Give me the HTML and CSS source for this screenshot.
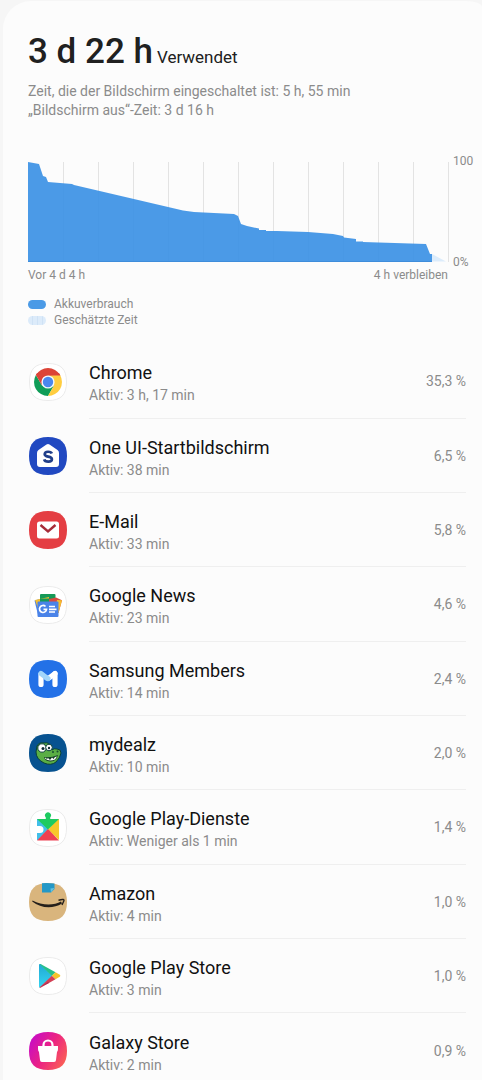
FILE: index.html
```html
<!DOCTYPE html>
<html lang="de">
<head>
    <meta charset="UTF-8">
    <meta name="viewport" content="width=device-width, initial-scale=1.0">
    <title>Akkuverbrauch</title>
    <link rel="stylesheet" href="styles.css">
</head>
<body>
    <main class="card">
        <header>
            <h1 class="title"><span class="total">3 d 22 h</span><span class="used">Verwendet</span></h1>
            <p class="summary">Zeit, die der Bildschirm eingeschaltet ist: 5 h, 55 min<br>„Bildschirm aus“-Zeit: 3 d 16 h</p>
        </header>

        <section class="usage">
            <div class="plot">
                <svg class="chart" viewBox="0 0 421 101" preserveAspectRatio="none" aria-hidden="true">
                    <path class="grid" d="M35.500 1V101M70.500 1V101M105.500 1V101M140.500 1V101M175.500 1V101M210.500 1V101M245.500 1V101M280.500 1V101M315.500 1V101M350.500 1V101M385.500 1V101M420.500 1V101"/>
                    <!-- estimated time -->
                    <path fill="#dcecfb" d="M404 93L418 100.500H404z"/>
                    <path class="level" d="M0 1L11 3 15 15 18 16 20 21 44 23 46 24 155 49.500 166 51 206 53 210 55 213 63 219 65 231 67.500V69H238V70H249L280 71 305 73 315 75 316 76.500 328 78V80.500H335V81L398 83 402 93H404V101H0z"/>
                    <path class="baseline" d="M0 100.500H404"/>
                </svg>
                <div class="scale"><span>100</span><span>0%</span></div>
            </div>
            <div class="range"><span>Vor 4 d 4 h</span><span>4 h verbleiben</span></div>
            <ul class="legend">
                <li><span class="swatch"></span>Akkuverbrauch</li>
                <li><span class="swatch swatch-estimate"></span>Geschätzte Zeit</li>
            </ul>
        </section>

        <ul class="apps">
            <li class="app">
                <svg class="icon" viewBox="0 0 38 38">
                    <path class="tile" d="M19 .5C32 .5 37.500 6 37.500 19S32 37.500 19 37.500.5 32 .5 19 6 .5 19 .5z"/>
                    <path fill="#dc4437" d="M6.900 12A14 14 0 0 1 31.100 12L19 13z"/>
                    <path fill="#109d58" d="M6.900 12A14 14 0 0 0 19 33L25 22.500 13 22.500z"/>
                    <path fill="#ffcd40" d="M31.100 12A14 14 0 0 1 19 33L25 22.500 19 12.500z"/>
                    <path fill="#dc4437" d="M6.900 12L13 22.500 19 12.500H31.400L30 10H8z"/>
                    <circle cx="19" cy="19" r="6.600" fill="#f4f8fc"/>
                    <circle cx="19" cy="19" r="5.200" fill="#4a87ee"/>
                </svg>
                <div class="entry"><div class="name"><h2>Chrome</h2><p>Aktiv: 3 h, 17 min</p></div><span class="percent">35,3 %</span></div>
            </li>
            <li class="app">
                <svg class="icon" viewBox="0 0 38 38">
                    <path fill="#2149c1" d="M19 0C32 0 38 6 38 19S32 38 19 38 0 32 0 19 6 0 19 0z"/>
                    <path fill="#fff" d="M17.500 7.500Q19 6.500 20.500 7.500L28.500 13Q30 14 30 16V27Q30 30 27 30H11Q8 30 8 27V16Q8 14 9.500 13z"/>
                    <path fill="none" stroke="#203e89" stroke-width="2.700" d="M22.800 16.500C22 14.200 15.800 13.900 15.700 17.200 15.700 20.600 22.900 18.600 22.900 22.200 22.800 25.700 15.900 25.200 15.200 22.400"/>
                </svg>
                <div class="entry"><div class="name"><h2>One UI-Startbildschirm</h2><p>Aktiv: 38 min</p></div><span class="percent">6,5 %</span></div>
            </li>
            <li class="app">
                <svg class="icon" viewBox="0 0 38 38">
                    <path fill="#e43e43" d="M19 0C32 0 38 6 38 19S32 38 19 38 0 32 0 19 6 0 19 0z"/>
                    <rect x="8" y="10.500" width="22" height="17" rx="2.500" fill="#fff"/>
                    <path fill="none" stroke="#a72c38" stroke-width="2.400" d="M11.500 14L19 20.500 26.500 14"/>
                </svg>
                <div class="entry"><div class="name"><h2>E-Mail</h2><p>Aktiv: 33 min</p></div><span class="percent">5,8 %</span></div>
            </li>
            <li class="app">
                <svg class="icon" viewBox="0 0 38 38">
                    <path class="tile" d="M19 .5C32 .5 37.500 6 37.500 19S32 37.500 19 37.500.5 32 .5 19 6 .5 19 .5z"/>
                    <rect x="11" y="8" width="15.500" height="12" rx="1" fill="#159957"/>
                    <path fill="#4a83e8" d="M5.500 14.500L11 13V29L9 29z"/>
                    <path fill="#f6be2d" d="M6 14L20 11V20L9 22z"/>
                    <path fill="#159957" d="M11 12.500H26V16H11z"/>
                    <path fill="#d74940" d="M20 13L27 11.500 33 14.200 29.500 27H20z"/>
                    <path fill="#f6be2d" d="M28 14L33 14.200 29.500 27 26 26z"/>
                    <rect x="8.500" y="15.500" width="21" height="15.500" rx="1" fill="#4a83e8"/>
                    <path fill="none" stroke="#fff" stroke-width="1.700" d="M16.500 20.500A3.500 3.500 0 1 0 17.500 23.300H14.500M20 20.500H26M20 23.300H27.500M20 26H26"/>
                </svg>
                <div class="entry"><div class="name"><h2>Google News</h2><p>Aktiv: 23 min</p></div><span class="percent">4,6 %</span></div>
            </li>
            <li class="app">
                <svg class="icon" viewBox="0 0 38 38">
                    <path fill="#2371e7" d="M19 0C32 0 38 6 38 19S32 38 19 38 0 32 0 19 6 0 19 0z"/>
                    <g fill="none" stroke-linecap="round" stroke-linejoin="round" stroke-width="5.200">
                        <path stroke="#fff" d="M12 14V24.500M26 13.500V24.500"/>
                        <path stroke="#a2d6fa" d="M12 13.500L18.500 18.500"/>
                        <path stroke="#fff" d="M20 18L26 13.500"/>
                        <path stroke="#a2d6fa" d="M17.500 17.800L19 18.500"/>
                    </g>
                </svg>
                <div class="entry"><div class="name"><h2>Samsung Members</h2><p>Aktiv: 14 min</p></div><span class="percent">2,4 %</span></div>
            </li>
            <li class="app">
                <svg class="icon" viewBox="0 0 38 38">
                    <path fill="#075290" d="M19 0C32 0 38 6 38 19S32 38 19 38 0 32 0 19 6 0 19 0z"/>
                    <path fill="#5aae45" stroke="#0b4038" d="M8 12Q10 8 15 9 20 8 22 12L23 16Q25 14 28 15 32 15 32 19 31 24 27 28 22 32 15 29 7 25 7 18z"/>
                    <path fill="#123d25" d="M15 23Q22 24 29 21 27 28 21 27.500 16 27 15 23z"/>
                    <path fill="#fff" d="M16 23.500L18 25 19 24 21 26 23 23.500 24.500 25 26 23 28 22.500 26 25.500Q20 28 16 24.500z"/>
                    <circle cx="13" cy="14" r="4.200" fill="#fff" stroke="#0b4038"/>
                    <circle cx="20" cy="13.500" r="3.300" fill="#fff" stroke="#0b4038"/>
                    <circle cx="14" cy="14.500" r="1.500" fill="#102d35"/>
                    <circle cx="20" cy="14" r="1.200" fill="#102d35"/>
                    <circle cx="24" cy="18" r="1" fill="#174c30"/>
                    <circle cx="28.500" cy="17.500" r="1" fill="#174c30"/>
                </svg>
                <div class="entry"><div class="name"><h2>mydealz</h2><p>Aktiv: 10 min</p></div><span class="percent">2,0 %</span></div>
            </li>
            <li class="app">
                <svg class="icon" viewBox="0 0 38 38">
                    <path class="tile" d="M19 .5C32 .5 37.500 6 37.500 19S32 37.500 19 37.500.5 32 .5 19 6 .5 19 .5z"/>
                    <path fill="#42bfe9" d="M8 10H10L19.500 20 9 31H8V24H11A3.500 3.500 0 0 0 11 17H8z"/>
                    <path fill="#f8c72b" d="M30 10V31L19 20.500 29 10z"/>
                    <path fill="#ee4052" d="M8 31.500L19 20 30 31.500z"/>
                    <path fill="#1ecb61" d="M8 10H16.800V8.500A3 3 0 1 1 21.200 8.500V10H30L19 20.500z"/>
                </svg>
                <div class="entry"><div class="name"><h2>Google Play-Dienste</h2><p>Aktiv: Weniger als 1 min</p></div><span class="percent">1,4 %</span></div>
            </li>
            <li class="app">
                <svg class="icon" viewBox="0 0 38 38">
                    <path fill="#d9b57d" d="M19 0C32 0 38 6 38 19S32 38 19 38 0 32 0 19 6 0 19 0z"/>
                    <path fill="#2398c7" d="M13 .2Q19 -.2 25.500.5V6L22 9.500H13z"/>
                    <path fill="#66c2df" d="M25.500 5L21.500 5.500 22 9.500z"/>
                    <path fill="#25201b" d="M3.500 17.500C13 22.500 25 22.500 32 18.500L33 20.500C24 26 12 25.500 3.200 18.500z"/>
                    <path fill="none" stroke="#25201b" stroke-width="1.400" d="M29.500 17.200Q36 15.500 34.800 18L33 22"/>
                </svg>
                <div class="entry"><div class="name"><h2>Amazon</h2><p>Aktiv: 4 min</p></div><span class="percent">1,0 %</span></div>
            </li>
            <li class="app">
                <svg class="icon" viewBox="0 0 38 38">
                    <defs>
                        <linearGradient id="play" x2="0" y2="1"><stop stop-color="#21a8d4"/><stop offset="1" stop-color="#35d5f1"/></linearGradient>
                    </defs>
                    <path class="tile" d="M19 .5C32 .5 37.500 6 37.500 19S32 37.500 19 37.500.5 32 .5 19 6 .5 19 .5z"/>
                    <path fill="url(#play)" d="M10 8Q10 6.500 11.500 7L23 18.700 11.500 30.500Q10 31 10 29.500z"/>
                    <path fill="#27c08a" d="M10.500 7Q11 6.700 12 7.200L26.500 15.200 22.800 19z"/>
                    <path fill="#f5c32c" d="M26.500 15.200L30.800 17.700Q32 18.700 30.800 19.800L26.500 22.300 22.800 18.700z"/>
                    <path fill="#d34055" d="M22.800 18.700L26.500 22.300 12 30.400Q11 31 10.500 30.500z"/>
                    <path fill="#a92f55" d="M10.500 30.500L19 25 20 26z"/>
                </svg>
                <div class="entry"><div class="name"><h2>Google Play Store</h2><p>Aktiv: 3 min</p></div><span class="percent">1,0 %</span></div>
            </li>
            <li class="app">
                <svg class="icon" viewBox="0 0 38 38">
                    <defs>
                        <linearGradient id="galaxy" x1="0" y1=".2" x2="1" y2=".8"><stop stop-color="#c60bc8"/><stop offset=".5" stop-color="#ec2382"/><stop offset="1" stop-color="#fb6352"/></linearGradient>
                    </defs>
                    <path fill="url(#galaxy)" d="M19 0C32 0 38 6 38 19S32 38 19 38 0 32 0 19 6 0 19 0z"/>
                    <path fill="#fff" d="M9 14H29V17Q29 19 28 20L27 28Q27 30 25 30H13Q11 30 11 28L10 20Q9 19 9 17z"/>
                    <path fill="none" stroke="#fff" stroke-width="2.200" d="M14.500 15V13A4.500 4.500 0 0 1 23.500 13V15"/>
                </svg>
                <div class="entry"><div class="name"><h2>Galaxy Store</h2><p>Aktiv: 2 min</p></div><span class="percent">0,9 %</span></div>
            </li>
        </ul>
    </main>
</body>
</html>
```

FILE: styles.css
```css
* {
    box-sizing: border-box;
}
body {
    margin: 0;
    padding: 1px 0 0 3px;
    background-color: #f6f6f6;
    color: #8b8b8b;
    font-family: Roboto, sans-serif;
}
h1, h2, p, ul {
    margin: 0;
    padding: 0;
    font-weight: 400;
}
ul {
    list-style: none;
}
.card {
    padding: 30px 16px 0 25px;
    background-color: #fcfcfc;
    border-radius: 28px 16px 0 0 / 28px 6px 0 0;
}

/* Header */
.title {
    display: flex;
    align-items: baseline;
    gap: 4px;
    color: #202020;
    line-height: 42px;
}
.total {
    font-size: 35px;
    font-weight: 500;
}
.used {
    font-size: 17px;
}
.summary {
    margin-top: 4px;
    font-size: 14px;
    line-height: 19px;
}

/* Battery chart */
.usage {
    margin-top: 41px;
    font-size: 12px;
    line-height: 16px;
}
.plot {
    display: flex;
    margin-right: -16px;
}
.chart {
    flex: 1;
    min-width: 0;
    height: 101px;
}
.grid {
    fill: none;
    stroke: #e3e3e3;
}
.level {
    fill: #378fe4;
    fill-opacity: 0.9;
}
.baseline {
    stroke: #3f8ddb;
}
.scale {
    display: flex;
    flex-direction: column;
    justify-content: space-between;
    width: 33px;
    margin: -8px 0;
    padding-left: 4px;
}
.range {
    display: flex;
    justify-content: space-between;
    margin-top: 5px;
    padding-right: 18px;
}
.legend {
    margin-top: 13px;
}
.legend li {
    display: flex;
    align-items: center;
    gap: 8px;
}
.swatch {
    width: 18px;
    height: 9px;
    border-radius: 5px;
    background-color: #4b9ae6;
}
.swatch-estimate {
    background: repeating-linear-gradient(90deg, #dcebfa 0 4px, #cfe2f5 4px 5px);
}

/* App list */
.apps {
    margin-top: 16px;
}
.app {
    display: flex;
    align-items: center;
    height: 74px;
}
.app:nth-child(3n + 1) {
    height: 75px;
}
.icon {
    flex: none;
    width: 38px;
    height: 38px;
    margin: 0 22px 0 1px;
}
.tile {
    fill: #ffffff;
    stroke: #ebebeb;
}
.entry {
    display: flex;
    flex: 1;
    align-items: center;
    justify-content: space-between;
    height: 100%;
    border-bottom: 1px solid #efefef;
}
.app:last-child .entry {
    border-bottom: none;
}
.name {
    padding-top: 4px;
}
.name h2 {
    color: #111111;
    font-size: 18px;
    line-height: 24px;
}
.name p {
    font-size: 14px;
    line-height: 20px;
}
.percent {
    font-size: 14px;
}
```
